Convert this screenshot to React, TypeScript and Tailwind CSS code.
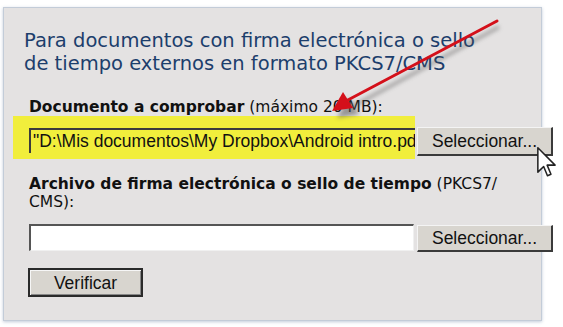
import React from "react";

const verdana = { fontFamily: '"DejaVu Sans", Verdana, sans-serif' };
const arial = { fontFamily: '"Liberation Sans", Arial, sans-serif' };

function WinButton({ label, className }: { label: string; className: string }) {
  return (
    <button
      style={arial}
      className={`bg-[#d8d5cf] text-[17.5px] text-[#111] border border-t-[#f4f4f4] border-l-[#f4f4f4] border-b-2 border-r-2 border-b-[#3a3a3a] border-r-[#3a3a3a] flex items-center justify-center shrink-0 ${className}`}
    >
      {label}
    </button>
  );
}

export default function App() {
  return (
    <div className="relative w-[563px] h-[327px] bg-white overflow-hidden">
      {/* Panel */}
      <div className="ml-[3px] mt-[7px] w-[539px] h-[314px] bg-[#e4e2e2] border border-[#c3ccd8] shadow-[0_1px_3px_rgba(120,140,170,0.45)]">
        <h2
          style={verdana}
          className="pl-[20px] pt-[21px] text-[19.5px] leading-[23px] text-[#1c3e6c]"
        >
          Para documentos con firma electrónica o sello
          <br />
          de tiempo externos en formato PKCS7/CMS
        </h2>

        {/* Documento */}
        <p style={verdana} className="pl-[25px] mt-[23px] text-[15.5px] leading-[18px] text-[#111]">
          <b>Documento a comprobar</b> (máximo 20 MB):
        </p>
        <div className="flex items-start">
          <div className="ml-[9px] w-[402px] h-[43px] shrink-0 bg-[#f1ee3c] pl-[16px] pt-[12px] overflow-hidden">
            <input
              readOnly
              value={'"D:\\Mis documentos\\My Dropbox\\Android intro.pdf"'}
              style={arial}
              className="w-[400px] h-[25px] bg-transparent border-t-2 border-l-2 border-[#3c3c3c] pl-[2px] text-[17.5px] text-[#111] outline-none"
            />
          </div>
          <WinButton label="Seleccionar..." className="ml-[2px] mt-[11px] w-[136px] h-[29px]" />
        </div>

        {/* Archivo de firma */}
        <p style={verdana} className="pl-[25px] mt-[16px] text-[15.5px] leading-[18px] text-[#111]">
          <b>Archivo de firma electrónica o sello de tiempo</b> (PKCS7/
          <br />
          CMS):
        </p>
        <div className="flex items-start mt-[13px] pl-[25px]">
          <input
            readOnly
            className="w-[385px] h-[27px] shrink-0 bg-white border-t-2 border-l-2 border-b border-r border-t-[#555] border-l-[#555] border-b-[#f0f0f0] border-r-[#f0f0f0] outline-none"
          />
          <WinButton label="Seleccionar..." className="ml-[3px] mt-[1px] w-[136px] h-[27px]" />
        </div>

        <div className="pl-[24px] mt-[16px]">
          <button
            style={arial}
            className="w-[115px] h-[29px] bg-[#d8d5cf] text-[17.5px] text-[#111] border-2 border-[#2a2a2a] shadow-[inset_1px_1px_0_#f6f6f6,inset_-1px_-1px_0_#888]"
          >
            Verificar
          </button>
        </div>
      </div>

      {/* Red annotation arrow */}
      <svg className="absolute left-0 top-0 pointer-events-none" width="563" height="327">
        <defs>
          <filter id="blur" x="-20%" y="-20%" width="140%" height="140%">
            <feGaussianBlur stdDeviation="2" />
          </filter>
        </defs>
        <g filter="url(#blur)" opacity="0.55">
          <line x1="499" y1="27" x2="350" y2="108" stroke="#555" strokeWidth="3" />
          <polygon points="337,118 349,98 359,114" fill="#555" />
        </g>
        <line x1="497" y1="21" x2="346" y2="101" stroke="#d4101a" strokeWidth="3" strokeLinecap="round" />
        <polygon points="332,111 343,92 353,108" fill="#d4101a" />
      </svg>

      {/* Mouse cursor */}
      <svg className="absolute left-[537px] top-[147px] pointer-events-none" width="20" height="32" viewBox="0 0 13 21">
        <path
          d="M0.5 0.5 L0.5 16.5 L4.3 12.8 L6.8 18.9 L9.1 17.9 L6.6 11.9 L11.8 11.9 Z"
          fill="#fff"
          stroke="#222"
          strokeWidth="1"
          strokeLinejoin="round"
        />
      </svg>
    </div>
  );
}
